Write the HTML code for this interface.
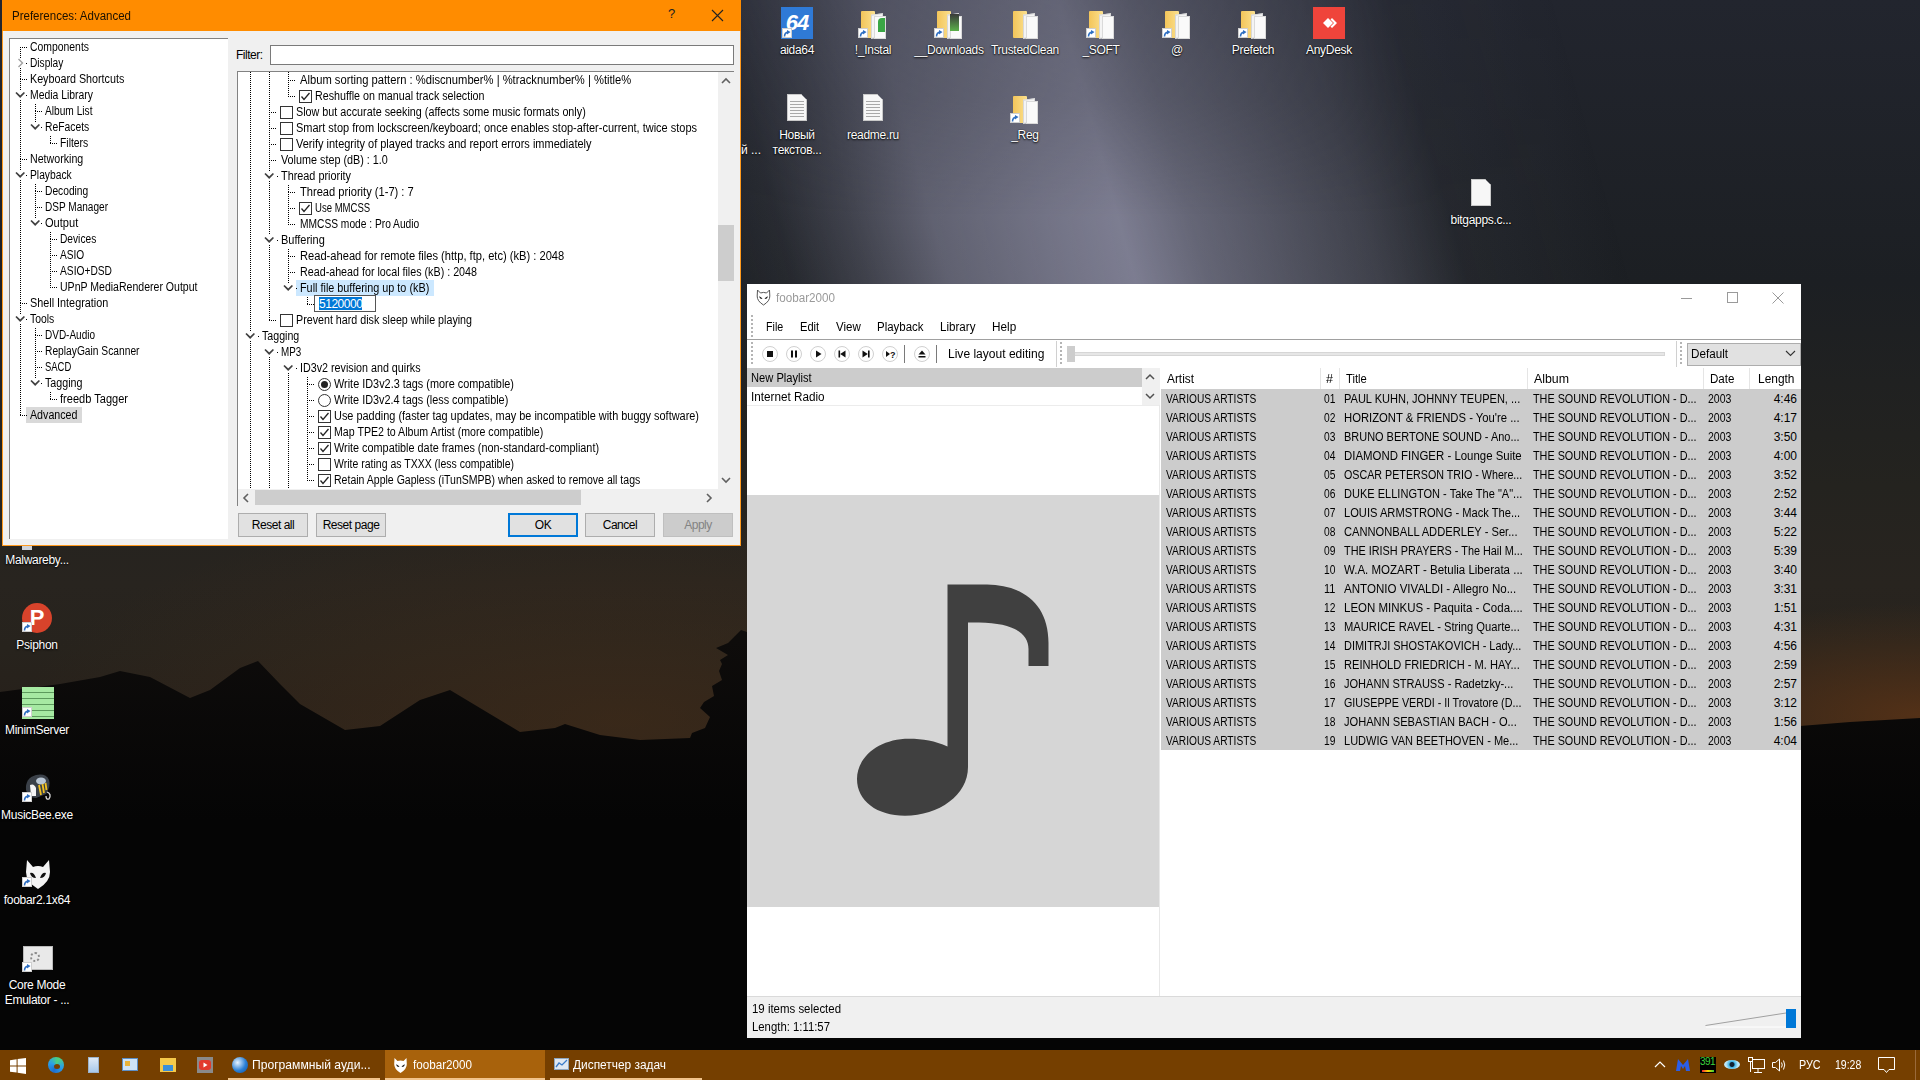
<!DOCTYPE html>
<html><head><meta charset="utf-8"><title>Desktop</title>
<style>
html,body{margin:0;padding:0;}
body{width:1920px;height:1080px;position:relative;overflow:hidden;font-family:"Liberation Sans",sans-serif;font-size:12px;color:#000;background:#0a0a0b;}
</style></head><body>
<svg style="position:absolute;left:0;top:0" width="1920" height="1080" viewBox="0 0 1920 1080"><defs><linearGradient id="sky" x1="0" y1="0" x2="0" y2="1080" gradientUnits="userSpaceOnUse"><stop offset="0" stop-color="#22252e"/><stop offset="0.26" stop-color="#1c1f23"/><stop offset="0.45" stop-color="#24231f"/><stop offset="0.54" stop-color="#28241f"/><stop offset="0.6" stop-color="#27231d"/><stop offset="0.65" stop-color="#27211b"/><stop offset="0.68" stop-color="#28211a"/><stop offset="1" stop-color="#28211a"/></linearGradient><radialGradient id="glow" cx="620" cy="720" r="600" gradientUnits="userSpaceOnUse" gradientTransform="translate(620 720) scale(1 0.3667) translate(-620 -720)"><stop offset="0" stop-color="#4a3019" stop-opacity="0.5"/><stop offset="1" stop-color="#4a3019" stop-opacity="0"/></radialGradient><radialGradient id="glow2" cx="1920" cy="715" r="320" gradientUnits="userSpaceOnUse" gradientTransform="translate(1920 715) scale(1 0.35) translate(-1920 -715)"><stop offset="0" stop-color="#5f3516" stop-opacity="0.78"/><stop offset="1" stop-color="#5c3517" stop-opacity="0"/></radialGradient><linearGradient id="band" x1="0" y1="0" x2="1928" y2="-532" gradientUnits="userSpaceOnUse"><stop offset="0.30" stop-color="#8a8aa0" stop-opacity="0"/><stop offset="0.345" stop-color="#8a8aa0" stop-opacity="0.10"/><stop offset="0.38" stop-color="#8a8aa0" stop-opacity="0.32"/><stop offset="0.42" stop-color="#8a8aa0" stop-opacity="0.62"/><stop offset="0.48" stop-color="#8a8aa0" stop-opacity="0.80"/><stop offset="0.51" stop-color="#8a8aa0" stop-opacity="0.88"/><stop offset="0.545" stop-color="#8a8aa0" stop-opacity="0.66"/><stop offset="0.627" stop-color="#8a8aa0" stop-opacity="0.32"/><stop offset="0.67" stop-color="#8a8aa0" stop-opacity="0.07"/><stop offset="0.75" stop-color="#8a8aa0" stop-opacity="0"/></linearGradient><linearGradient id="bandm" x1="0" y1="0" x2="0" y2="620" gradientUnits="userSpaceOnUse"><stop offset="0" stop-color="#fff" stop-opacity="0.72"/><stop offset="0.16" stop-color="#fff" stop-opacity="0.8"/><stop offset="0.35" stop-color="#fff" stop-opacity="1"/><stop offset="1" stop-color="#fff" stop-opacity="1"/></linearGradient><mask id="bmask" maskUnits="userSpaceOnUse" x="0" y="0" width="1920" height="620"><rect width="1920" height="620" fill="url(#bandm)"/></mask><linearGradient id="mtn" x1="0" y1="640" x2="0" y2="820" gradientUnits="userSpaceOnUse"><stop offset="0" stop-color="#0e0c0b"/><stop offset="1" stop-color="#050505"/></linearGradient></defs><rect width="1920" height="1080" fill="url(#sky)"/><rect width="1920" height="1080" fill="url(#glow)"/><rect width="1920" height="1080" fill="url(#glow2)"/><rect width="1920" height="620" fill="url(#band)" mask="url(#bmask)"/><path d="M0 692 L60 684 L100 677 L120 671 L150 677 L190 698 L210 690 L240 668 L258 661 L280 684 L300 704 L345 730 L380 726 L420 700 L450 690 L480 708 L520 732 L555 728 L565 724 L600 735 L640 740 L690 738 L692 733 L705 728 L710 717 L700 708 L704 702 L714 696 L712 686 L722 680 L719 671 L722 664 L720 660 L728 655 L716 648 L728 643 L735 636 L741 630 L747 632 L752 700 L760 745 L1000 745 L1700 740 L1760 728 L1800 726 L1850 722 L1920 718 L1920 1080 L0 1080Z" fill="url(#mtn)"/></svg><div style="position:absolute;left:781px;top:7px;width:32px;height:32px;background:#2f7ad6"></div><div style="position:absolute;left:781px;top:7px;width:32px;height:32px;line-height:32px;text-align:center;color:#fff;font-weight:bold;font-size:22px;font-style:italic;letter-spacing:-1px">64</div><div style="position:absolute;left:782px;top:28px;width:10px;height:10px;background:#fff;border:1px solid #cfcfcf;box-sizing:border-box"></div><svg style="position:absolute;left:782px;top:28px" width="10" height="10"><path d="M2.5 8.5 Q2.5 4.5 6.5 4" fill="none" stroke="#2f6fc2" stroke-width="1.6"/><path d="M5 2 L8.5 4 L5 6.5Z" fill="#2f6fc2"/></svg><div style="position:absolute;left:747px;top:42px;width:100px;text-align:center;line-height:16px;color:#fff;white-space:pre;text-shadow:0 1px 2px #000,0 0 1px #000;letter-spacing:-0.3px">aida64</div><div style="position:absolute;left:861px;top:11px;width:14px;height:27px;background:linear-gradient(90deg,#f3c55a,#fbe08e);border-radius:1px"></div><div style="position:absolute;left:871px;top:14px;width:12px;height:24px;background:#f4f4f4;border:1px solid #d8d8d8;box-sizing:border-box;transform:skewY(-8deg)"></div><div style="position:absolute;left:874px;top:16px;width:12px;height:23px;background:#fafafa;border:1px solid #dadada;box-sizing:border-box;"></div><div style="position:absolute;left:878px;top:18px;width:7px;height:14px;background:#3aa645;border-radius:4px 0 0 0"></div><div style="position:absolute;left:858px;top:28px;width:10px;height:10px;background:#fff;border:1px solid #cfcfcf;box-sizing:border-box"></div><svg style="position:absolute;left:858px;top:28px" width="10" height="10"><path d="M2.5 8.5 Q2.5 4.5 6.5 4" fill="none" stroke="#2f6fc2" stroke-width="1.6"/><path d="M5 2 L8.5 4 L5 6.5Z" fill="#2f6fc2"/></svg><div style="position:absolute;left:823px;top:42px;width:100px;text-align:center;line-height:16px;color:#fff;white-space:pre;text-shadow:0 1px 2px #000,0 0 1px #000;letter-spacing:-0.3px">!_Instal</div><div style="position:absolute;left:937px;top:11px;width:14px;height:27px;background:linear-gradient(90deg,#f3c55a,#fbe08e);border-radius:1px"></div><div style="position:absolute;left:947px;top:14px;width:12px;height:24px;background:#f4f4f4;border:1px solid #d8d8d8;box-sizing:border-box;transform:skewY(-8deg)"></div><div style="position:absolute;left:950px;top:16px;width:12px;height:23px;background:#fafafa;border:1px solid #dadada;box-sizing:border-box;"></div><div style="position:absolute;left:950px;top:14px;width:9px;height:17px;background:linear-gradient(#3a3a3a,#5bb04a)"></div><div style="position:absolute;left:934px;top:28px;width:10px;height:10px;background:#fff;border:1px solid #cfcfcf;box-sizing:border-box"></div><svg style="position:absolute;left:934px;top:28px" width="10" height="10"><path d="M2.5 8.5 Q2.5 4.5 6.5 4" fill="none" stroke="#2f6fc2" stroke-width="1.6"/><path d="M5 2 L8.5 4 L5 6.5Z" fill="#2f6fc2"/></svg><div style="position:absolute;left:899px;top:42px;width:100px;text-align:center;line-height:16px;color:#fff;white-space:pre;text-shadow:0 1px 2px #000,0 0 1px #000;letter-spacing:-0.3px">__Downloads</div><div style="position:absolute;left:1013px;top:11px;width:14px;height:27px;background:linear-gradient(90deg,#f3c55a,#fbe08e);border-radius:1px"></div><div style="position:absolute;left:1023px;top:14px;width:12px;height:24px;background:#f4f4f4;border:1px solid #d8d8d8;box-sizing:border-box;transform:skewY(-8deg)"></div><div style="position:absolute;left:1026px;top:16px;width:12px;height:23px;background:#fafafa;border:1px solid #dadada;box-sizing:border-box;"></div><div style="position:absolute;left:975px;top:42px;width:100px;text-align:center;line-height:16px;color:#fff;white-space:pre;text-shadow:0 1px 2px #000,0 0 1px #000;letter-spacing:-0.3px">TrustedClean</div><div style="position:absolute;left:1089px;top:11px;width:14px;height:27px;background:linear-gradient(90deg,#f3c55a,#fbe08e);border-radius:1px"></div><div style="position:absolute;left:1099px;top:14px;width:12px;height:24px;background:#f4f4f4;border:1px solid #d8d8d8;box-sizing:border-box;transform:skewY(-8deg)"></div><div style="position:absolute;left:1102px;top:16px;width:12px;height:23px;background:#fafafa;border:1px solid #dadada;box-sizing:border-box;"></div><div style="position:absolute;left:1086px;top:28px;width:10px;height:10px;background:#fff;border:1px solid #cfcfcf;box-sizing:border-box"></div><svg style="position:absolute;left:1086px;top:28px" width="10" height="10"><path d="M2.5 8.5 Q2.5 4.5 6.5 4" fill="none" stroke="#2f6fc2" stroke-width="1.6"/><path d="M5 2 L8.5 4 L5 6.5Z" fill="#2f6fc2"/></svg><div style="position:absolute;left:1051px;top:42px;width:100px;text-align:center;line-height:16px;color:#fff;white-space:pre;text-shadow:0 1px 2px #000,0 0 1px #000;letter-spacing:-0.3px">_SOFT</div><div style="position:absolute;left:1165px;top:11px;width:14px;height:27px;background:linear-gradient(90deg,#f3c55a,#fbe08e);border-radius:1px"></div><div style="position:absolute;left:1175px;top:14px;width:12px;height:24px;background:#f4f4f4;border:1px solid #d8d8d8;box-sizing:border-box;transform:skewY(-8deg)"></div><div style="position:absolute;left:1178px;top:16px;width:12px;height:23px;background:#fafafa;border:1px solid #dadada;box-sizing:border-box;"></div><div style="position:absolute;left:1162px;top:28px;width:10px;height:10px;background:#fff;border:1px solid #cfcfcf;box-sizing:border-box"></div><svg style="position:absolute;left:1162px;top:28px" width="10" height="10"><path d="M2.5 8.5 Q2.5 4.5 6.5 4" fill="none" stroke="#2f6fc2" stroke-width="1.6"/><path d="M5 2 L8.5 4 L5 6.5Z" fill="#2f6fc2"/></svg><div style="position:absolute;left:1127px;top:42px;width:100px;text-align:center;line-height:16px;color:#fff;white-space:pre;text-shadow:0 1px 2px #000,0 0 1px #000;letter-spacing:-0.3px">@</div><div style="position:absolute;left:1241px;top:11px;width:14px;height:27px;background:linear-gradient(90deg,#f3c55a,#fbe08e);border-radius:1px"></div><div style="position:absolute;left:1251px;top:14px;width:12px;height:24px;background:#f4f4f4;border:1px solid #d8d8d8;box-sizing:border-box;transform:skewY(-8deg)"></div><div style="position:absolute;left:1254px;top:16px;width:12px;height:23px;background:#fafafa;border:1px solid #dadada;box-sizing:border-box;"></div><div style="position:absolute;left:1238px;top:28px;width:10px;height:10px;background:#fff;border:1px solid #cfcfcf;box-sizing:border-box"></div><svg style="position:absolute;left:1238px;top:28px" width="10" height="10"><path d="M2.5 8.5 Q2.5 4.5 6.5 4" fill="none" stroke="#2f6fc2" stroke-width="1.6"/><path d="M5 2 L8.5 4 L5 6.5Z" fill="#2f6fc2"/></svg><div style="position:absolute;left:1203px;top:42px;width:100px;text-align:center;line-height:16px;color:#fff;white-space:pre;text-shadow:0 1px 2px #000,0 0 1px #000;letter-spacing:-0.3px">Prefetch</div><div style="position:absolute;left:1313px;top:7px;width:32px;height:32px;background:#ef443b"></div><svg style="position:absolute;left:1313px;top:7px" width="32" height="32"><path d="M10 16 L15 11 L20 16 L15 21Z" fill="#fff"/><path d="M19 11 L24 16 L19 21 L17.5 19.5 L21 16 L17.5 12.5Z" fill="#fff"/></svg><div style="position:absolute;left:1279px;top:42px;width:100px;text-align:center;line-height:16px;color:#fff;white-space:pre;text-shadow:0 1px 2px #000,0 0 1px #000;letter-spacing:-0.3px">AnyDesk</div><div style="position:absolute;left:787px;top:94px;width:20px;height:27px;background:#f7f7f7;border:1px solid #c9c9c9;box-sizing:border-box;clip-path:polygon(0 0,70% 0,100% 22%,100% 100%,0 100%)"></div><div style="position:absolute;left:790px;top:101px;width:14px;height:17px;background:repeating-linear-gradient(to bottom,#a9a9a9 0 1px,transparent 1px 3px)"></div><div style="position:absolute;left:747px;top:127px;width:100px;text-align:center;line-height:16px;color:#fff;white-space:pre;text-shadow:0 1px 2px #000,0 0 1px #000;letter-spacing:-0.3px">Новый</div><div style="position:absolute;left:747px;top:142px;width:100px;text-align:center;line-height:16px;color:#fff;white-space:pre;text-shadow:0 1px 2px #000,0 0 1px #000;letter-spacing:-0.3px">текстов...</div><div style="position:absolute;left:863px;top:94px;width:20px;height:27px;background:#f7f7f7;border:1px solid #c9c9c9;box-sizing:border-box;clip-path:polygon(0 0,70% 0,100% 22%,100% 100%,0 100%)"></div><div style="position:absolute;left:866px;top:101px;width:14px;height:17px;background:repeating-linear-gradient(to bottom,#a9a9a9 0 1px,transparent 1px 3px)"></div><div style="position:absolute;left:823px;top:127px;width:100px;text-align:center;line-height:16px;color:#fff;white-space:pre;text-shadow:0 1px 2px #000,0 0 1px #000;letter-spacing:-0.3px">readme.ru</div><div style="position:absolute;left:1013px;top:96px;width:14px;height:27px;background:linear-gradient(90deg,#f3c55a,#fbe08e);border-radius:1px"></div><div style="position:absolute;left:1023px;top:99px;width:12px;height:24px;background:#f4f4f4;border:1px solid #d8d8d8;box-sizing:border-box;transform:skewY(-8deg)"></div><div style="position:absolute;left:1026px;top:101px;width:12px;height:23px;background:#fafafa;border:1px solid #dadada;box-sizing:border-box;"></div><div style="position:absolute;left:1010px;top:113px;width:10px;height:10px;background:#fff;border:1px solid #cfcfcf;box-sizing:border-box"></div><svg style="position:absolute;left:1010px;top:113px" width="10" height="10"><path d="M2.5 8.5 Q2.5 4.5 6.5 4" fill="none" stroke="#2f6fc2" stroke-width="1.6"/><path d="M5 2 L8.5 4 L5 6.5Z" fill="#2f6fc2"/></svg><div style="position:absolute;left:975px;top:127px;width:100px;text-align:center;line-height:16px;color:#fff;white-space:pre;text-shadow:0 1px 2px #000,0 0 1px #000;letter-spacing:-0.3px">_Reg</div><div style="position:absolute;left:741px;top:142px;line-height:16px;color:#fff;text-shadow:0 1px 2px #000">й ...</div><div style="position:absolute;left:1471px;top:179px;width:20px;height:27px;background:#f7f7f7;border:1px solid #c9c9c9;box-sizing:border-box;clip-path:polygon(0 0,70% 0,100% 22%,100% 100%,0 100%)"></div><div style="position:absolute;left:1431px;top:212px;width:100px;text-align:center;line-height:16px;color:#fff;white-space:pre;text-shadow:0 1px 2px #000,0 0 1px #000;letter-spacing:-0.3px">bitgapps.c...</div><div style="position:absolute;left:22px;top:546px;width:10px;height:4px;background:#cfd3da"></div><div style="position:absolute;left:-13px;top:552px;width:100px;text-align:center;line-height:16px;color:#fff;white-space:pre;text-shadow:0 1px 2px #000,0 0 1px #000;letter-spacing:-0.3px">Malwareby...</div><div style="position:absolute;left:22px;top:603px;width:30px;height:30px;border-radius:50%;background:#d8432b"></div><div style="position:absolute;left:22px;top:603px;width:30px;height:30px;line-height:30px;text-align:center;color:#fff;font-weight:bold;font-size:22px">P</div><div style="position:absolute;left:22px;top:622px;width:10px;height:10px;background:#fff;border:1px solid #cfcfcf;box-sizing:border-box"></div><svg style="position:absolute;left:22px;top:622px" width="10" height="10"><path d="M2.5 8.5 Q2.5 4.5 6.5 4" fill="none" stroke="#2f6fc2" stroke-width="1.6"/><path d="M5 2 L8.5 4 L5 6.5Z" fill="#2f6fc2"/></svg><div style="position:absolute;left:-13px;top:637px;width:100px;text-align:center;line-height:16px;color:#fff;white-space:pre;text-shadow:0 1px 2px #000,0 0 1px #000;letter-spacing:-0.3px">Psiphon</div><div style="position:absolute;left:22px;top:687px;width:32px;height:32px;background:repeating-linear-gradient(to bottom,#a6e9a2 0 5px,#5c9a5c 5px 6px)"></div><div style="position:absolute;left:22px;top:707px;width:10px;height:10px;background:#fff;border:1px solid #cfcfcf;box-sizing:border-box"></div><svg style="position:absolute;left:22px;top:707px" width="10" height="10"><path d="M2.5 8.5 Q2.5 4.5 6.5 4" fill="none" stroke="#2f6fc2" stroke-width="1.6"/><path d="M5 2 L8.5 4 L5 6.5Z" fill="#2f6fc2"/></svg><div style="position:absolute;left:-13px;top:722px;width:100px;text-align:center;line-height:16px;color:#fff;white-space:pre;text-shadow:0 1px 2px #000,0 0 1px #000;letter-spacing:-0.3px">MinimServer</div><svg style="position:absolute;left:22px;top:772px" width="32" height="32"><path d="M4 18 Q3 6 14 3 Q24 1 27 8 Q29 14 24 22 L14 26 Q6 26 4 18Z" fill="#3a4048"/><ellipse cx="19" cy="9" rx="5" ry="3.5" fill="#b9c6d4"/><path d="M8 13 Q12 11 14 16 L14 24 L9 24Z" fill="#f4f4f4"/><path d="M17 13 L19 23 M20.5 12 L22 21 M23.5 11 L24.5 18" stroke="#f0c020" stroke-width="1.8"/><path d="M25 20 Q30 22 27 27 Q24 28 24 24" fill="none" stroke="#ddd" stroke-width="1.3"/></svg><div style="position:absolute;left:22px;top:792px;width:10px;height:10px;background:#fff;border:1px solid #cfcfcf;box-sizing:border-box"></div><svg style="position:absolute;left:22px;top:792px" width="10" height="10"><path d="M2.5 8.5 Q2.5 4.5 6.5 4" fill="none" stroke="#2f6fc2" stroke-width="1.6"/><path d="M5 2 L8.5 4 L5 6.5Z" fill="#2f6fc2"/></svg><div style="position:absolute;left:-13px;top:807px;width:100px;text-align:center;line-height:16px;color:#fff;white-space:pre;text-shadow:0 1px 2px #000,0 0 1px #000;letter-spacing:-0.3px">MusicBee.exe</div><svg style="position:absolute;left:22px;top:858px" width="32" height="32"><path d="M5 2 L11 9 Q16 7 21 9 L27 2 L28 14 Q28 24 16 31 Q4 24 4 14Z" fill="#f4f4f4"/><path d="M8 15 Q12 14 14 20 Q9 20 8 15Z M24 15 Q20 14 18 20 Q23 20 24 15Z" fill="#111"/></svg><div style="position:absolute;left:22px;top:877px;width:10px;height:10px;background:#fff;border:1px solid #cfcfcf;box-sizing:border-box"></div><svg style="position:absolute;left:22px;top:877px" width="10" height="10"><path d="M2.5 8.5 Q2.5 4.5 6.5 4" fill="none" stroke="#2f6fc2" stroke-width="1.6"/><path d="M5 2 L8.5 4 L5 6.5Z" fill="#2f6fc2"/></svg><div style="position:absolute;left:-13px;top:892px;width:100px;text-align:center;line-height:16px;color:#fff;white-space:pre;text-shadow:0 1px 2px #000,0 0 1px #000;letter-spacing:-0.3px">foobar2.1x64</div><div style="position:absolute;left:23px;top:946px;width:30px;height:24px;background:#e9e9e9;border:1px solid #bbb;box-sizing:border-box"></div><div style="position:absolute;left:30px;top:952px;width:10px;height:10px;border-radius:50%;border:2px dotted #8a8a8a;box-sizing:border-box"></div><div style="position:absolute;left:22px;top:962px;width:10px;height:10px;background:#fff;border:1px solid #cfcfcf;box-sizing:border-box"></div><svg style="position:absolute;left:22px;top:962px" width="10" height="10"><path d="M2.5 8.5 Q2.5 4.5 6.5 4" fill="none" stroke="#2f6fc2" stroke-width="1.6"/><path d="M5 2 L8.5 4 L5 6.5Z" fill="#2f6fc2"/></svg><div style="position:absolute;left:-13px;top:977px;width:100px;text-align:center;line-height:16px;color:#fff;white-space:pre;text-shadow:0 1px 2px #000,0 0 1px #000;letter-spacing:-0.3px">Core Mode</div><div style="position:absolute;left:-13px;top:992px;width:100px;text-align:center;line-height:16px;color:#fff;white-space:pre;text-shadow:0 1px 2px #000,0 0 1px #000;letter-spacing:-0.3px">Emulator - ...</div><div style="position:absolute;left:2px;top:0px;width:739px;height:546px;background:#f0f0f0;border:1px solid #ff9a1f;box-sizing:border-box"></div><div style="position:absolute;left:2px;top:0px;width:739px;height:31px;background:#ff8c00"></div><div style="position:absolute;left:11.5px;top:8px;white-space:pre;transform:scaleX(0.9591);transform-origin:0 0;font-size:12px;line-height:16px;color:#1a1000">Preferences: Advanced</div><div style="position:absolute;left:668px;top:6px;white-space:pre;font-size:13px;line-height:16px;color:#222">?</div><svg style="position:absolute;left:711px;top:9px" width="13" height="13"><path d="M1 1 L12 12 M12 1 L1 12" stroke="#222" stroke-width="1.1"/></svg><div style="position:absolute;left:9px;top:38px;width:219px;height:501px;background:#fff;border-top:1px solid #828282;border-left:1px solid #828282;box-sizing:border-box"></div><div style="position:absolute;left:26px;top:407px;width:56px;height:16px;background:#d9d9d9"></div><div style="position:absolute;left:20px;top:47px;width:8px;height:1px;background:repeating-linear-gradient(to right,#000 0 1px,transparent 1px 2px)"></div><div style="position:absolute;left:30px;top:39px;white-space:pre;transform:scaleX(0.8670);transform-origin:0 0;line-height:16px">Components</div><svg style="position:absolute;left:17px;top:58px" width="7" height="10"><path d="M1.5 1 L5.5 5 L1.5 9" fill="none" stroke="#a0a0a0" stroke-width="1.4"/></svg><div style="position:absolute;left:26px;top:63px;width:1px;height:1px;background:#000"></div><div style="position:absolute;left:30px;top:55px;white-space:pre;transform:scaleX(0.8448);transform-origin:0 0;line-height:16px">Display</div><div style="position:absolute;left:20px;top:79px;width:8px;height:1px;background:repeating-linear-gradient(to right,#000 0 1px,transparent 1px 2px)"></div><div style="position:absolute;left:30px;top:71px;white-space:pre;transform:scaleX(0.8942);transform-origin:0 0;line-height:16px">Keyboard Shortcuts</div><svg style="position:absolute;left:15px;top:91px" width="11" height="8"><path d="M1 1.5 L5.2 5.7 L9.4 1.5" fill="none" stroke="#404040" stroke-width="1.7"/></svg><div style="position:absolute;left:26px;top:95px;width:1px;height:1px;background:#000"></div><div style="position:absolute;left:30px;top:87px;white-space:pre;transform:scaleX(0.8665);transform-origin:0 0;line-height:16px">Media Library</div><div style="position:absolute;left:35px;top:111px;width:8px;height:1px;background:repeating-linear-gradient(to right,#000 0 1px,transparent 1px 2px)"></div><div style="position:absolute;left:45px;top:103px;white-space:pre;transform:scaleX(0.8477);transform-origin:0 0;line-height:16px">Album List</div><svg style="position:absolute;left:30px;top:123px" width="11" height="8"><path d="M1 1.5 L5.2 5.7 L9.4 1.5" fill="none" stroke="#404040" stroke-width="1.7"/></svg><div style="position:absolute;left:41px;top:127px;width:1px;height:1px;background:#000"></div><div style="position:absolute;left:45px;top:119px;white-space:pre;transform:scaleX(0.8616);transform-origin:0 0;line-height:16px">ReFacets</div><div style="position:absolute;left:50px;top:143px;width:8px;height:1px;background:repeating-linear-gradient(to right,#000 0 1px,transparent 1px 2px)"></div><div style="position:absolute;left:60px;top:135px;white-space:pre;transform:scaleX(0.8647);transform-origin:0 0;line-height:16px">Filters</div><div style="position:absolute;left:20px;top:159px;width:8px;height:1px;background:repeating-linear-gradient(to right,#000 0 1px,transparent 1px 2px)"></div><div style="position:absolute;left:30px;top:151px;white-space:pre;transform:scaleX(0.8870);transform-origin:0 0;line-height:16px">Networking</div><svg style="position:absolute;left:15px;top:171px" width="11" height="8"><path d="M1 1.5 L5.2 5.7 L9.4 1.5" fill="none" stroke="#404040" stroke-width="1.7"/></svg><div style="position:absolute;left:26px;top:175px;width:1px;height:1px;background:#000"></div><div style="position:absolute;left:30px;top:167px;white-space:pre;transform:scaleX(0.8572);transform-origin:0 0;line-height:16px">Playback</div><div style="position:absolute;left:35px;top:191px;width:8px;height:1px;background:repeating-linear-gradient(to right,#000 0 1px,transparent 1px 2px)"></div><div style="position:absolute;left:45px;top:183px;white-space:pre;transform:scaleX(0.8530);transform-origin:0 0;line-height:16px">Decoding</div><div style="position:absolute;left:35px;top:207px;width:8px;height:1px;background:repeating-linear-gradient(to right,#000 0 1px,transparent 1px 2px)"></div><div style="position:absolute;left:45px;top:199px;white-space:pre;transform:scaleX(0.8383);transform-origin:0 0;line-height:16px">DSP Manager</div><svg style="position:absolute;left:30px;top:219px" width="11" height="8"><path d="M1 1.5 L5.2 5.7 L9.4 1.5" fill="none" stroke="#404040" stroke-width="1.7"/></svg><div style="position:absolute;left:41px;top:223px;width:1px;height:1px;background:#000"></div><div style="position:absolute;left:45px;top:215px;white-space:pre;transform:scaleX(0.9228);transform-origin:0 0;line-height:16px">Output</div><div style="position:absolute;left:50px;top:239px;width:8px;height:1px;background:repeating-linear-gradient(to right,#000 0 1px,transparent 1px 2px)"></div><div style="position:absolute;left:60px;top:231px;white-space:pre;transform:scaleX(0.8492);transform-origin:0 0;line-height:16px">Devices</div><div style="position:absolute;left:50px;top:255px;width:8px;height:1px;background:repeating-linear-gradient(to right,#000 0 1px,transparent 1px 2px)"></div><div style="position:absolute;left:60px;top:247px;white-space:pre;transform:scaleX(0.8453);transform-origin:0 0;line-height:16px">ASIO</div><div style="position:absolute;left:50px;top:271px;width:8px;height:1px;background:repeating-linear-gradient(to right,#000 0 1px,transparent 1px 2px)"></div><div style="position:absolute;left:60px;top:263px;white-space:pre;transform:scaleX(0.8520);transform-origin:0 0;line-height:16px">ASIO+DSD</div><div style="position:absolute;left:50px;top:287px;width:8px;height:1px;background:repeating-linear-gradient(to right,#000 0 1px,transparent 1px 2px)"></div><div style="position:absolute;left:60px;top:279px;white-space:pre;transform:scaleX(0.8783);transform-origin:0 0;line-height:16px">UPnP MediaRenderer Output</div><div style="position:absolute;left:20px;top:303px;width:8px;height:1px;background:repeating-linear-gradient(to right,#000 0 1px,transparent 1px 2px)"></div><div style="position:absolute;left:30px;top:295px;white-space:pre;transform:scaleX(0.9022);transform-origin:0 0;line-height:16px">Shell Integration</div><svg style="position:absolute;left:15px;top:315px" width="11" height="8"><path d="M1 1.5 L5.2 5.7 L9.4 1.5" fill="none" stroke="#404040" stroke-width="1.7"/></svg><div style="position:absolute;left:26px;top:319px;width:1px;height:1px;background:#000"></div><div style="position:absolute;left:30px;top:311px;white-space:pre;transform:scaleX(0.8656);transform-origin:0 0;line-height:16px">Tools</div><div style="position:absolute;left:35px;top:335px;width:8px;height:1px;background:repeating-linear-gradient(to right,#000 0 1px,transparent 1px 2px)"></div><div style="position:absolute;left:45px;top:327px;white-space:pre;transform:scaleX(0.8329);transform-origin:0 0;line-height:16px">DVD-Audio</div><div style="position:absolute;left:35px;top:351px;width:8px;height:1px;background:repeating-linear-gradient(to right,#000 0 1px,transparent 1px 2px)"></div><div style="position:absolute;left:45px;top:343px;white-space:pre;transform:scaleX(0.8534);transform-origin:0 0;line-height:16px">ReplayGain Scanner</div><div style="position:absolute;left:35px;top:367px;width:8px;height:1px;background:repeating-linear-gradient(to right,#000 0 1px,transparent 1px 2px)"></div><div style="position:absolute;left:45px;top:359px;white-space:pre;transform:scaleX(0.7873);transform-origin:0 0;line-height:16px">SACD</div><svg style="position:absolute;left:30px;top:379px" width="11" height="8"><path d="M1 1.5 L5.2 5.7 L9.4 1.5" fill="none" stroke="#404040" stroke-width="1.7"/></svg><div style="position:absolute;left:41px;top:383px;width:1px;height:1px;background:#000"></div><div style="position:absolute;left:45px;top:375px;white-space:pre;transform:scaleX(0.8919);transform-origin:0 0;line-height:16px">Tagging</div><div style="position:absolute;left:50px;top:399px;width:8px;height:1px;background:repeating-linear-gradient(to right,#000 0 1px,transparent 1px 2px)"></div><div style="position:absolute;left:60px;top:391px;white-space:pre;transform:scaleX(0.9209);transform-origin:0 0;line-height:16px">freedb Tagger</div><div style="position:absolute;left:20px;top:415px;width:8px;height:1px;background:repeating-linear-gradient(to right,#000 0 1px,transparent 1px 2px)"></div><div style="position:absolute;left:30px;top:407px;white-space:pre;transform:scaleX(0.8899);transform-origin:0 0;line-height:16px">Advanced</div><div style="position:absolute;left:20px;top:47px;width:1px;height:11px;background:repeating-linear-gradient(to bottom,#000 0 1px,transparent 1px 2px)"></div><div style="position:absolute;left:20px;top:68px;width:1px;height:11px;background:repeating-linear-gradient(to bottom,#000 0 1px,transparent 1px 2px)"></div><div style="position:absolute;left:20px;top:79px;width:1px;height:11px;background:repeating-linear-gradient(to bottom,#000 0 1px,transparent 1px 2px)"></div><div style="position:absolute;left:20px;top:100px;width:1px;height:59px;background:repeating-linear-gradient(to bottom,#000 0 1px,transparent 1px 2px)"></div><div style="position:absolute;left:20px;top:159px;width:1px;height:11px;background:repeating-linear-gradient(to bottom,#000 0 1px,transparent 1px 2px)"></div><div style="position:absolute;left:20px;top:180px;width:1px;height:123px;background:repeating-linear-gradient(to bottom,#000 0 1px,transparent 1px 2px)"></div><div style="position:absolute;left:20px;top:303px;width:1px;height:11px;background:repeating-linear-gradient(to bottom,#000 0 1px,transparent 1px 2px)"></div><div style="position:absolute;left:20px;top:324px;width:1px;height:91px;background:repeating-linear-gradient(to bottom,#000 0 1px,transparent 1px 2px)"></div><div style="position:absolute;left:35px;top:104px;width:1px;height:7px;background:repeating-linear-gradient(to bottom,#000 0 1px,transparent 1px 2px)"></div><div style="position:absolute;left:35px;top:111px;width:1px;height:11px;background:repeating-linear-gradient(to bottom,#000 0 1px,transparent 1px 2px)"></div><div style="position:absolute;left:35px;top:184px;width:1px;height:7px;background:repeating-linear-gradient(to bottom,#000 0 1px,transparent 1px 2px)"></div><div style="position:absolute;left:35px;top:191px;width:1px;height:16px;background:repeating-linear-gradient(to bottom,#000 0 1px,transparent 1px 2px)"></div><div style="position:absolute;left:35px;top:207px;width:1px;height:11px;background:repeating-linear-gradient(to bottom,#000 0 1px,transparent 1px 2px)"></div><div style="position:absolute;left:35px;top:328px;width:1px;height:7px;background:repeating-linear-gradient(to bottom,#000 0 1px,transparent 1px 2px)"></div><div style="position:absolute;left:35px;top:335px;width:1px;height:16px;background:repeating-linear-gradient(to bottom,#000 0 1px,transparent 1px 2px)"></div><div style="position:absolute;left:35px;top:351px;width:1px;height:16px;background:repeating-linear-gradient(to bottom,#000 0 1px,transparent 1px 2px)"></div><div style="position:absolute;left:35px;top:367px;width:1px;height:11px;background:repeating-linear-gradient(to bottom,#000 0 1px,transparent 1px 2px)"></div><div style="position:absolute;left:50px;top:136px;width:1px;height:7px;background:repeating-linear-gradient(to bottom,#000 0 1px,transparent 1px 2px)"></div><div style="position:absolute;left:50px;top:232px;width:1px;height:7px;background:repeating-linear-gradient(to bottom,#000 0 1px,transparent 1px 2px)"></div><div style="position:absolute;left:50px;top:239px;width:1px;height:16px;background:repeating-linear-gradient(to bottom,#000 0 1px,transparent 1px 2px)"></div><div style="position:absolute;left:50px;top:255px;width:1px;height:16px;background:repeating-linear-gradient(to bottom,#000 0 1px,transparent 1px 2px)"></div><div style="position:absolute;left:50px;top:271px;width:1px;height:16px;background:repeating-linear-gradient(to bottom,#000 0 1px,transparent 1px 2px)"></div><div style="position:absolute;left:50px;top:392px;width:1px;height:7px;background:repeating-linear-gradient(to bottom,#000 0 1px,transparent 1px 2px)"></div><div style="position:absolute;left:20px;top:47px;width:1px;height:1px;background:repeating-linear-gradient(to bottom,#000 0 1px,transparent 1px 2px)"></div><div style="position:absolute;left:236px;top:47px;white-space:pre;line-height:16px;letter-spacing:-0.47px;">Filter:</div><div style="position:absolute;left:270px;top:45px;width:464px;height:20px;background:#fff;border:1px solid #7a7a7a;box-sizing:border-box"></div><div style="position:absolute;left:237px;top:71px;width:497px;height:435px;background:#fff;border-top:1px solid #828282;border-left:1px solid #828282;box-sizing:border-box"></div><div style="position:absolute;left:718px;top:72px;width:16px;height:417px;background:#f0f0f0"></div><div style="position:absolute;left:718px;top:225px;width:16px;height:56px;background:#cdcdcd"></div><svg style="position:absolute;left:721px;top:77px" width="10" height="8"><path d="M1 6 L5 2 L9 6" fill="none" stroke="#606060" stroke-width="1.6"/></svg><svg style="position:absolute;left:721px;top:476px" width="10" height="8"><path d="M1 2 L5 6 L9 2" fill="none" stroke="#606060" stroke-width="1.6"/></svg><div style="position:absolute;left:238px;top:489px;width:496px;height:17px;background:#f0f0f0"></div><div style="position:absolute;left:255px;top:490px;width:326px;height:15px;background:#cdcdcd"></div><svg style="position:absolute;left:242px;top:493px" width="8" height="10"><path d="M6 1 L2 5 L6 9" fill="none" stroke="#606060" stroke-width="1.6"/></svg><svg style="position:absolute;left:705px;top:493px" width="8" height="10"><path d="M2 1 L6 5 L2 9" fill="none" stroke="#606060" stroke-width="1.6"/></svg><div style="position:absolute;left:0;top:0;width:1920px;height:1080px;clip:rect(72px,718px,489px,238px)"><div style="position:absolute;left:250px;top:72px;width:1px;height:259px;background:repeating-linear-gradient(to bottom,#000 0 1px,transparent 1px 2px)"></div><div style="position:absolute;left:250px;top:341px;width:1px;height:148px;background:repeating-linear-gradient(to bottom,#000 0 1px,transparent 1px 2px)"></div><div style="position:absolute;left:269px;top:72px;width:1px;height:40px;background:repeating-linear-gradient(to bottom,#000 0 1px,transparent 1px 2px)"></div><div style="position:absolute;left:269px;top:112px;width:1px;height:16px;background:repeating-linear-gradient(to bottom,#000 0 1px,transparent 1px 2px)"></div><div style="position:absolute;left:269px;top:128px;width:1px;height:16px;background:repeating-linear-gradient(to bottom,#000 0 1px,transparent 1px 2px)"></div><div style="position:absolute;left:269px;top:144px;width:1px;height:16px;background:repeating-linear-gradient(to bottom,#000 0 1px,transparent 1px 2px)"></div><div style="position:absolute;left:269px;top:160px;width:1px;height:11px;background:repeating-linear-gradient(to bottom,#000 0 1px,transparent 1px 2px)"></div><div style="position:absolute;left:269px;top:181px;width:1px;height:54px;background:repeating-linear-gradient(to bottom,#000 0 1px,transparent 1px 2px)"></div><div style="position:absolute;left:269px;top:245px;width:1px;height:75px;background:repeating-linear-gradient(to bottom,#000 0 1px,transparent 1px 2px)"></div><div style="position:absolute;left:269px;top:357px;width:1px;height:132px;background:repeating-linear-gradient(to bottom,#000 0 1px,transparent 1px 2px)"></div><div style="position:absolute;left:288px;top:72px;width:1px;height:8px;background:repeating-linear-gradient(to bottom,#000 0 1px,transparent 1px 2px)"></div><div style="position:absolute;left:288px;top:80px;width:1px;height:16px;background:repeating-linear-gradient(to bottom,#000 0 1px,transparent 1px 2px)"></div><div style="position:absolute;left:288px;top:185px;width:1px;height:7px;background:repeating-linear-gradient(to bottom,#000 0 1px,transparent 1px 2px)"></div><div style="position:absolute;left:288px;top:192px;width:1px;height:16px;background:repeating-linear-gradient(to bottom,#000 0 1px,transparent 1px 2px)"></div><div style="position:absolute;left:288px;top:208px;width:1px;height:16px;background:repeating-linear-gradient(to bottom,#000 0 1px,transparent 1px 2px)"></div><div style="position:absolute;left:288px;top:249px;width:1px;height:7px;background:repeating-linear-gradient(to bottom,#000 0 1px,transparent 1px 2px)"></div><div style="position:absolute;left:288px;top:256px;width:1px;height:16px;background:repeating-linear-gradient(to bottom,#000 0 1px,transparent 1px 2px)"></div><div style="position:absolute;left:288px;top:272px;width:1px;height:11px;background:repeating-linear-gradient(to bottom,#000 0 1px,transparent 1px 2px)"></div><div style="position:absolute;left:288px;top:373px;width:1px;height:116px;background:repeating-linear-gradient(to bottom,#000 0 1px,transparent 1px 2px)"></div><div style="position:absolute;left:307px;top:297px;width:1px;height:7px;background:repeating-linear-gradient(to bottom,#000 0 1px,transparent 1px 2px)"></div><div style="position:absolute;left:307px;top:377px;width:1px;height:7px;background:repeating-linear-gradient(to bottom,#000 0 1px,transparent 1px 2px)"></div><div style="position:absolute;left:307px;top:384px;width:1px;height:16px;background:repeating-linear-gradient(to bottom,#000 0 1px,transparent 1px 2px)"></div><div style="position:absolute;left:307px;top:400px;width:1px;height:16px;background:repeating-linear-gradient(to bottom,#000 0 1px,transparent 1px 2px)"></div><div style="position:absolute;left:307px;top:416px;width:1px;height:16px;background:repeating-linear-gradient(to bottom,#000 0 1px,transparent 1px 2px)"></div><div style="position:absolute;left:307px;top:432px;width:1px;height:16px;background:repeating-linear-gradient(to bottom,#000 0 1px,transparent 1px 2px)"></div><div style="position:absolute;left:307px;top:448px;width:1px;height:16px;background:repeating-linear-gradient(to bottom,#000 0 1px,transparent 1px 2px)"></div><div style="position:absolute;left:307px;top:464px;width:1px;height:16px;background:repeating-linear-gradient(to bottom,#000 0 1px,transparent 1px 2px)"></div><div style="position:absolute;left:288px;top:80px;width:8px;height:1px;background:repeating-linear-gradient(to right,#000 0 1px,transparent 1px 2px)"></div><div style="position:absolute;left:299.5px;top:72px;white-space:pre;transform:scaleX(0.9330);transform-origin:0 0;line-height:16px">Album sorting pattern : %discnumber% | %tracknumber% | %title%</div><div style="position:absolute;left:288px;top:96px;width:8px;height:1px;background:repeating-linear-gradient(to right,#000 0 1px,transparent 1px 2px)"></div><div style="position:absolute;left:299px;top:90px;width:11px;height:11px;border:1px solid #333;background:#fff"></div><svg style="position:absolute;left:299px;top:90px" width="13" height="13"><path d="M2.5 6.5 L5 9.5 L10.5 3" fill="none" stroke="#222" stroke-width="1.3"/></svg><div style="position:absolute;left:315px;top:88px;white-space:pre;transform:scaleX(0.8926);transform-origin:0 0;line-height:16px">Reshuffle on manual track selection</div><div style="position:absolute;left:269px;top:112px;width:8px;height:1px;background:repeating-linear-gradient(to right,#000 0 1px,transparent 1px 2px)"></div><div style="position:absolute;left:280px;top:106px;width:11px;height:11px;border:1px solid #333;background:#fff"></div><div style="position:absolute;left:296px;top:104px;white-space:pre;transform:scaleX(0.8982);transform-origin:0 0;line-height:16px">Slow but accurate seeking (affects some music formats only)</div><div style="position:absolute;left:269px;top:128px;width:8px;height:1px;background:repeating-linear-gradient(to right,#000 0 1px,transparent 1px 2px)"></div><div style="position:absolute;left:280px;top:122px;width:11px;height:11px;border:1px solid #333;background:#fff"></div><div style="position:absolute;left:296px;top:120px;white-space:pre;transform:scaleX(0.9151);transform-origin:0 0;line-height:16px">Smart stop from lockscreen/keyboard; once enables stop-after-current, twice stops</div><div style="position:absolute;left:269px;top:144px;width:8px;height:1px;background:repeating-linear-gradient(to right,#000 0 1px,transparent 1px 2px)"></div><div style="position:absolute;left:280px;top:138px;width:11px;height:11px;border:1px solid #333;background:#fff"></div><div style="position:absolute;left:296px;top:136px;white-space:pre;transform:scaleX(0.9154);transform-origin:0 0;line-height:16px">Verify integrity of played tracks and report errors immediately</div><div style="position:absolute;left:269px;top:160px;width:8px;height:1px;background:repeating-linear-gradient(to right,#000 0 1px,transparent 1px 2px)"></div><div style="position:absolute;left:280.5px;top:152px;white-space:pre;transform:scaleX(0.8991);transform-origin:0 0;line-height:16px">Volume step (dB) : 1.0</div><svg style="position:absolute;left:264px;top:172px" width="11" height="8"><path d="M1 1.5 L5.2 5.7 L9.4 1.5" fill="none" stroke="#404040" stroke-width="1.7"/></svg><div style="position:absolute;left:277px;top:176px;width:1px;height:1px;background:#000"></div><div style="position:absolute;left:280.5px;top:168px;white-space:pre;transform:scaleX(0.9047);transform-origin:0 0;line-height:16px">Thread priority</div><div style="position:absolute;left:288px;top:192px;width:8px;height:1px;background:repeating-linear-gradient(to right,#000 0 1px,transparent 1px 2px)"></div><div style="position:absolute;left:299.5px;top:184px;white-space:pre;transform:scaleX(0.9269);transform-origin:0 0;line-height:16px">Thread priority (1-7) : 7</div><div style="position:absolute;left:288px;top:208px;width:8px;height:1px;background:repeating-linear-gradient(to right,#000 0 1px,transparent 1px 2px)"></div><div style="position:absolute;left:299px;top:202px;width:11px;height:11px;border:1px solid #333;background:#fff"></div><svg style="position:absolute;left:299px;top:202px" width="13" height="13"><path d="M2.5 6.5 L5 9.5 L10.5 3" fill="none" stroke="#222" stroke-width="1.3"/></svg><div style="position:absolute;left:315px;top:200px;white-space:pre;transform:scaleX(0.7968);transform-origin:0 0;line-height:16px">Use MMCSS</div><div style="position:absolute;left:288px;top:224px;width:8px;height:1px;background:repeating-linear-gradient(to right,#000 0 1px,transparent 1px 2px)"></div><div style="position:absolute;left:299.5px;top:216px;white-space:pre;transform:scaleX(0.8514);transform-origin:0 0;line-height:16px">MMCSS mode : Pro Audio</div><svg style="position:absolute;left:264px;top:236px" width="11" height="8"><path d="M1 1.5 L5.2 5.7 L9.4 1.5" fill="none" stroke="#404040" stroke-width="1.7"/></svg><div style="position:absolute;left:277px;top:240px;width:1px;height:1px;background:#000"></div><div style="position:absolute;left:280.5px;top:232px;white-space:pre;transform:scaleX(0.9150);transform-origin:0 0;line-height:16px">Buffering</div><div style="position:absolute;left:288px;top:256px;width:8px;height:1px;background:repeating-linear-gradient(to right,#000 0 1px,transparent 1px 2px)"></div><div style="position:absolute;left:299.5px;top:248px;white-space:pre;transform:scaleX(0.9278);transform-origin:0 0;line-height:16px">Read-ahead for remote files (http, ftp, etc) (kB) : 2048</div><div style="position:absolute;left:288px;top:272px;width:8px;height:1px;background:repeating-linear-gradient(to right,#000 0 1px,transparent 1px 2px)"></div><div style="position:absolute;left:299.5px;top:264px;white-space:pre;transform:scaleX(0.8934);transform-origin:0 0;line-height:16px">Read-ahead for local files (kB) : 2048</div><div style="position:absolute;left:296px;top:280px;width:138px;height:16px;background:#cce8ff"></div><svg style="position:absolute;left:283px;top:284px" width="11" height="8"><path d="M1 1.5 L5.2 5.7 L9.4 1.5" fill="none" stroke="#404040" stroke-width="1.7"/></svg><div style="position:absolute;left:296px;top:288px;width:1px;height:1px;background:#000"></div><div style="position:absolute;left:299.5px;top:280px;white-space:pre;transform:scaleX(0.9027);transform-origin:0 0;line-height:16px">Full file buffering up to (kB)</div><div style="position:absolute;left:307px;top:304px;width:7px;height:1px;background:repeating-linear-gradient(to right,#000 0 1px,transparent 1px 2px)"></div><div style="position:absolute;left:314px;top:295px;width:62px;height:17px;background:#fff;border:1px solid #555;box-sizing:border-box"></div><div style="position:absolute;left:319px;top:297px;width:43px;height:13px;background:#0078d7"></div><div style="position:absolute;left:319px;top:296px;white-space:pre;line-height:16px;color:#fff;letter-spacing:-0.47px;">5120000</div><div style="position:absolute;left:269px;top:320px;width:8px;height:1px;background:repeating-linear-gradient(to right,#000 0 1px,transparent 1px 2px)"></div><div style="position:absolute;left:280px;top:314px;width:11px;height:11px;border:1px solid #333;background:#fff"></div><div style="position:absolute;left:296px;top:312px;white-space:pre;transform:scaleX(0.8914);transform-origin:0 0;line-height:16px">Prevent hard disk sleep while playing</div><svg style="position:absolute;left:245px;top:332px" width="11" height="8"><path d="M1 1.5 L5.2 5.7 L9.4 1.5" fill="none" stroke="#404040" stroke-width="1.7"/></svg><div style="position:absolute;left:258px;top:336px;width:1px;height:1px;background:#000"></div><div style="position:absolute;left:261.5px;top:328px;white-space:pre;transform:scaleX(0.8859);transform-origin:0 0;line-height:16px">Tagging</div><svg style="position:absolute;left:264px;top:348px" width="11" height="8"><path d="M1 1.5 L5.2 5.7 L9.4 1.5" fill="none" stroke="#404040" stroke-width="1.7"/></svg><div style="position:absolute;left:277px;top:352px;width:1px;height:1px;background:#000"></div><div style="position:absolute;left:280.5px;top:344px;white-space:pre;transform:scaleX(0.8203);transform-origin:0 0;line-height:16px">MP3</div><svg style="position:absolute;left:283px;top:364px" width="11" height="8"><path d="M1 1.5 L5.2 5.7 L9.4 1.5" fill="none" stroke="#404040" stroke-width="1.7"/></svg><div style="position:absolute;left:296px;top:368px;width:1px;height:1px;background:#000"></div><div style="position:absolute;left:299.5px;top:360px;white-space:pre;transform:scaleX(0.8944);transform-origin:0 0;line-height:16px">ID3v2 revision and quirks</div><div style="position:absolute;left:307px;top:384px;width:8px;height:1px;background:repeating-linear-gradient(to right,#000 0 1px,transparent 1px 2px)"></div><div style="position:absolute;left:318px;top:378px;width:11px;height:11px;border:1px solid #333;border-radius:50%;background:#fff"></div><div style="position:absolute;left:321px;top:381px;width:7px;height:7px;border-radius:50%;background:#222"></div><div style="position:absolute;left:334px;top:376px;white-space:pre;transform:scaleX(0.9067);transform-origin:0 0;line-height:16px">Write ID3v2.3 tags (more compatible)</div><div style="position:absolute;left:307px;top:400px;width:8px;height:1px;background:repeating-linear-gradient(to right,#000 0 1px,transparent 1px 2px)"></div><div style="position:absolute;left:318px;top:394px;width:11px;height:11px;border:1px solid #333;border-radius:50%;background:#fff"></div><div style="position:absolute;left:334px;top:392px;white-space:pre;transform:scaleX(0.9051);transform-origin:0 0;line-height:16px">Write ID3v2.4 tags (less compatible)</div><div style="position:absolute;left:307px;top:416px;width:8px;height:1px;background:repeating-linear-gradient(to right,#000 0 1px,transparent 1px 2px)"></div><div style="position:absolute;left:318px;top:410px;width:11px;height:11px;border:1px solid #333;background:#fff"></div><svg style="position:absolute;left:318px;top:410px" width="13" height="13"><path d="M2.5 6.5 L5 9.5 L10.5 3" fill="none" stroke="#222" stroke-width="1.3"/></svg><div style="position:absolute;left:334px;top:408px;white-space:pre;transform:scaleX(0.9105);transform-origin:0 0;line-height:16px">Use padding (faster tag updates, may be incompatible with buggy software)</div><div style="position:absolute;left:307px;top:432px;width:8px;height:1px;background:repeating-linear-gradient(to right,#000 0 1px,transparent 1px 2px)"></div><div style="position:absolute;left:318px;top:426px;width:11px;height:11px;border:1px solid #333;background:#fff"></div><svg style="position:absolute;left:318px;top:426px" width="13" height="13"><path d="M2.5 6.5 L5 9.5 L10.5 3" fill="none" stroke="#222" stroke-width="1.3"/></svg><div style="position:absolute;left:334px;top:424px;white-space:pre;transform:scaleX(0.8846);transform-origin:0 0;line-height:16px">Map TPE2 to Album Artist (more compatible)</div><div style="position:absolute;left:307px;top:448px;width:8px;height:1px;background:repeating-linear-gradient(to right,#000 0 1px,transparent 1px 2px)"></div><div style="position:absolute;left:318px;top:442px;width:11px;height:11px;border:1px solid #333;background:#fff"></div><svg style="position:absolute;left:318px;top:442px" width="13" height="13"><path d="M2.5 6.5 L5 9.5 L10.5 3" fill="none" stroke="#222" stroke-width="1.3"/></svg><div style="position:absolute;left:334px;top:440px;white-space:pre;transform:scaleX(0.9037);transform-origin:0 0;line-height:16px">Write compatible date frames (non-standard-compliant)</div><div style="position:absolute;left:307px;top:464px;width:8px;height:1px;background:repeating-linear-gradient(to right,#000 0 1px,transparent 1px 2px)"></div><div style="position:absolute;left:318px;top:458px;width:11px;height:11px;border:1px solid #333;background:#fff"></div><div style="position:absolute;left:334px;top:456px;white-space:pre;transform:scaleX(0.8753);transform-origin:0 0;line-height:16px">Write rating as TXXX (less compatible)</div><div style="position:absolute;left:307px;top:480px;width:8px;height:1px;background:repeating-linear-gradient(to right,#000 0 1px,transparent 1px 2px)"></div><div style="position:absolute;left:318px;top:474px;width:11px;height:11px;border:1px solid #333;background:#fff"></div><svg style="position:absolute;left:318px;top:474px" width="13" height="13"><path d="M2.5 6.5 L5 9.5 L10.5 3" fill="none" stroke="#222" stroke-width="1.3"/></svg><div style="position:absolute;left:334px;top:472px;white-space:pre;transform:scaleX(0.8774);transform-origin:0 0;line-height:16px">Retain Apple Gapless (iTunSMPB) when asked to remove all tags</div></div><div style="position:absolute;left:238px;top:513px;width:68px;height:22px;border:1px solid #adadad;background:#e1e1e1;"></div><div style="position:absolute;left:238px;top:513px;width:70px;height:24px;line-height:24px;text-align:center;color:#000;letter-spacing:-0.47px;">Reset all</div><div style="position:absolute;left:316px;top:513px;width:68px;height:22px;border:1px solid #adadad;background:#e1e1e1;"></div><div style="position:absolute;left:316px;top:513px;width:70px;height:24px;line-height:24px;text-align:center;color:#000;letter-spacing:-0.47px;">Reset page</div><div style="position:absolute;left:508px;top:513px;width:66px;height:20px;border:2px solid #0078d7;background:#e1e1e1"></div><div style="position:absolute;left:508px;top:513px;width:70px;height:24px;line-height:24px;text-align:center;letter-spacing:-0.47px;">OK</div><div style="position:absolute;left:585px;top:513px;width:68px;height:22px;border:1px solid #adadad;background:#e1e1e1;"></div><div style="position:absolute;left:585px;top:513px;width:70px;height:24px;line-height:24px;text-align:center;color:#000;letter-spacing:-0.47px;">Cancel</div><div style="position:absolute;left:663px;top:513px;width:68px;height:22px;border:1px solid #bfbfbf;background:#cccccc"></div><div style="position:absolute;left:663px;top:513px;width:70px;height:24px;line-height:24px;text-align:center;color:#838383;letter-spacing:-0.47px;">Apply</div><div style="position:absolute;left:747px;top:284px;width:1054px;height:754px;background:#fff"></div><svg style="position:absolute;left:756px;top:289px" width="15" height="17"><path d="M1.5 1 L4.5 4 Q7.5 2.8 10.5 4 L13.5 1 L13.8 7 Q14 12 7.5 16 Q1 12 1.2 7 Z" fill="#fff" stroke="#555" stroke-width="1"/><path d="M3 7.5 Q5 7 6.5 10 Q4 10.5 3 7.5Z M12 7.5 Q10 7 8.5 10 Q11 10.5 12 7.5Z" fill="#222"/></svg><div style="position:absolute;left:776px;top:290px;white-space:pre;transform:scaleX(0.9714);transform-origin:0 0;line-height:16px;color:#9a9a9a">foobar2000</div><div style="position:absolute;left:1681px;top:298px;width:11px;height:1px;background:#9a9a9a"></div><div style="position:absolute;left:1727px;top:292px;width:9px;height:9px;border:1px solid #9a9a9a"></div><svg style="position:absolute;left:1772px;top:292px" width="12" height="12"><path d="M0.5 0.5 L11.5 11.5 M11.5 0.5 L0.5 11.5" stroke="#9a9a9a" stroke-width="1"/></svg><div style="position:absolute;left:751px;top:315px;width:2px;height:23px;background:repeating-linear-gradient(to bottom,#b4b4b4 0 2px,transparent 2px 4px)"></div><div style="position:absolute;left:766px;top:319px;white-space:pre;transform:scaleX(0.8892);transform-origin:0 0;line-height:16px">File</div><div style="position:absolute;left:800px;top:319px;white-space:pre;transform:scaleX(0.9281);transform-origin:0 0;line-height:16px">Edit</div><div style="position:absolute;left:836px;top:319px;white-space:pre;transform:scaleX(0.9614);transform-origin:0 0;line-height:16px">View</div><div style="position:absolute;left:877px;top:319px;white-space:pre;transform:scaleX(0.9548);transform-origin:0 0;line-height:16px">Playback</div><div style="position:absolute;left:940px;top:319px;white-space:pre;transform:scaleX(0.9676);transform-origin:0 0;line-height:16px">Library</div><div style="position:absolute;left:992px;top:319px;white-space:pre;transform:scaleX(0.9803);transform-origin:0 0;line-height:16px">Help</div><div style="position:absolute;left:747px;top:339px;width:1054px;height:1px;background:#a0a0a0"></div><div style="position:absolute;left:751px;top:342px;width:2px;height:24px;background:repeating-linear-gradient(to bottom,#b4b4b4 0 2px,transparent 2px 4px)"></div><div style="position:absolute;left:762px;top:346px;width:14px;height:14px;border:1px solid #d0d0d0;border-radius:50%"></div><svg style="position:absolute;left:762px;top:346px" width="16" height="16"><rect x="5" y="5" width="6" height="6" fill="#111"/></svg><div style="position:absolute;left:786px;top:346px;width:14px;height:14px;border:1px solid #d0d0d0;border-radius:50%"></div><svg style="position:absolute;left:786px;top:346px" width="16" height="16"><rect x="5" y="4.5" width="2" height="7" fill="#111"/><rect x="9" y="4.5" width="2" height="7" fill="#111"/></svg><div style="position:absolute;left:810px;top:346px;width:14px;height:14px;border:1px solid #d0d0d0;border-radius:50%"></div><svg style="position:absolute;left:810px;top:346px" width="16" height="16"><path d="M6 4.5 L11.5 8 L6 11.5Z" fill="#111"/></svg><div style="position:absolute;left:834px;top:346px;width:14px;height:14px;border:1px solid #d0d0d0;border-radius:50%"></div><svg style="position:absolute;left:834px;top:346px" width="16" height="16"><rect x="4.5" y="4.5" width="1.6" height="7" fill="#111"/><path d="M11.5 4.5 L6.2 8 L11.5 11.5Z" fill="#111"/></svg><div style="position:absolute;left:858px;top:346px;width:14px;height:14px;border:1px solid #d0d0d0;border-radius:50%"></div><svg style="position:absolute;left:858px;top:346px" width="16" height="16"><rect x="10" y="4.5" width="1.6" height="7" fill="#111"/><path d="M4.5 4.5 L9.8 8 L4.5 11.5Z" fill="#111"/></svg><div style="position:absolute;left:882px;top:346px;width:14px;height:14px;border:1px solid #d0d0d0;border-radius:50%"></div><svg style="position:absolute;left:882px;top:346px" width="16" height="16"><path d="M4 5 L8 8 L4 11Z" fill="#111"/><text x="8" y="12" font-size="9" font-family="Liberation Sans" font-weight="bold" fill="#111">?</text></svg><div style="position:absolute;left:914px;top:346px;width:14px;height:14px;border:1px solid #d0d0d0;border-radius:50%"></div><svg style="position:absolute;left:914px;top:346px" width="16" height="16"><path d="M4.5 8.5 L8 4.5 L11.5 8.5Z" fill="#111"/><rect x="4.5" y="10" width="7" height="1.5" fill="#111"/></svg><div style="position:absolute;left:904px;top:345px;width:1px;height:18px;background:#7a7a7a"></div><div style="position:absolute;left:936px;top:345px;width:1px;height:18px;background:#7a7a7a"></div><div style="position:absolute;left:948px;top:346px;white-space:pre;transform:scaleX(1.0034);transform-origin:0 0;line-height:16px">Live layout editing</div><div style="position:absolute;left:1056px;top:341px;width:1px;height:26px;background:#d0d0d0"></div><div style="position:absolute;left:1060px;top:342px;width:2px;height:24px;background:repeating-linear-gradient(to bottom,#b4b4b4 0 2px,transparent 2px 4px)"></div><div style="position:absolute;left:1068px;top:352px;width:597px;height:4px;background:#e6e6e6;border:1px solid #d6d6d6;box-sizing:border-box"></div><div style="position:absolute;left:1067px;top:346px;width:8px;height:16px;background:#cdcdcd"></div><div style="position:absolute;left:1676px;top:341px;width:1px;height:26px;background:#d0d0d0"></div><div style="position:absolute;left:1680px;top:342px;width:2px;height:24px;background:repeating-linear-gradient(to bottom,#b4b4b4 0 2px,transparent 2px 4px)"></div><div style="position:absolute;left:1687px;top:343px;width:114px;height:23px;background:#e1e1e1;border:1px solid #adadad;box-sizing:border-box"></div><div style="position:absolute;left:1691px;top:346px;white-space:pre;transform:scaleX(0.9729);transform-origin:0 0;line-height:16px">Default</div><svg style="position:absolute;left:1785px;top:350px" width="11" height="7"><path d="M1 1 L5.5 5.5 L10 1" fill="none" stroke="#333" stroke-width="1.1"/></svg><div style="position:absolute;left:747px;top:368px;width:395px;height:19px;background:#cccccc"></div><div style="position:absolute;left:751px;top:369px;white-space:pre;transform:scaleX(0.9287);transform-origin:0 0;line-height:18px">New Playlist</div><div style="position:absolute;left:751px;top:388px;white-space:pre;transform:scaleX(0.9762);transform-origin:0 0;line-height:18px">Internet Radio</div><div style="position:absolute;left:1142px;top:368px;width:18px;height:37px;background:#f0f0f0"></div><svg style="position:absolute;left:1145px;top:373px" width="10" height="8"><path d="M1 6 L5 2 L9 6" fill="none" stroke="#505050" stroke-width="1.5"/></svg><svg style="position:absolute;left:1145px;top:392px" width="10" height="8"><path d="M1 2 L5 6 L9 2" fill="none" stroke="#505050" stroke-width="1.5"/></svg><div style="position:absolute;left:747px;top:405px;width:413px;height:1px;background:#ececec"></div><div style="position:absolute;left:747px;top:495px;width:412px;height:412px;background:#d6d6d6"></div><svg style="position:absolute;left:747px;top:495px" width="412" height="412" viewBox="0 0 412 412"><path d="M200.5 89.5 L240 89.5 C275 90 301.5 108 301.5 148 L301.5 171 L281.5 171 L281.5 154 C281.5 138 266 128 232 127.5 L221 127.5 L221 272 C221 300 192 320.7 158 320.7 C130 320.7 110 306 110 284 C110 262 132 243.8 162 243.8 C176 243.8 188 246 200.5 251.5 Z" fill="#404040"/></svg><div style="position:absolute;left:1159px;top:405px;width:1px;height:591px;background:#e8e8e8"></div><div style="position:absolute;left:1167px;top:371px;white-space:pre;transform:scaleX(0.9874);transform-origin:0 0;line-height:16px">Artist</div><div style="position:absolute;left:1326px;top:371px;white-space:pre;transform:scaleX(1.0467);transform-origin:0 0;line-height:16px">#</div><div style="position:absolute;left:1346px;top:371px;white-space:pre;transform:scaleX(0.9355);transform-origin:0 0;line-height:16px">Title</div><div style="position:absolute;left:1534px;top:371px;white-space:pre;transform:scaleX(1.0289);transform-origin:0 0;line-height:16px">Album</div><div style="position:absolute;left:1710px;top:371px;white-space:pre;transform:scaleX(0.9661);transform-origin:0 0;line-height:16px">Date</div><div style="position:absolute;left:1758px;top:371px;white-space:pre;transform:scaleX(0.9945);transform-origin:0 0;line-height:16px">Length</div><div style="position:absolute;left:1320px;top:368px;width:1px;height:21px;background:#e5e5e5"></div><div style="position:absolute;left:1339px;top:368px;width:1px;height:21px;background:#e5e5e5"></div><div style="position:absolute;left:1527px;top:368px;width:1px;height:21px;background:#e5e5e5"></div><div style="position:absolute;left:1703px;top:368px;width:1px;height:21px;background:#e5e5e5"></div><div style="position:absolute;left:1749px;top:368px;width:1px;height:21px;background:#e5e5e5"></div><div style="position:absolute;left:1161px;top:389px;width:640px;height:361px;background:#cccccc"></div><div style="position:absolute;left:1166px;top:391px;white-space:pre;transform:scaleX(0.8489);transform-origin:0 0;line-height:16px">VARIOUS ARTISTS</div><div style="position:absolute;left:1324px;top:391px;white-space:pre;transform:scaleX(0.8533);transform-origin:0 0;line-height:16px">01</div><div style="position:absolute;left:1344px;top:391px;white-space:pre;transform:scaleX(0.9196);transform-origin:0 0;line-height:16px">PAUL KUHN, JOHNNY TEUPEN, ...</div><div style="position:absolute;left:1533px;top:391px;white-space:pre;transform:scaleX(0.9015);transform-origin:0 0;line-height:16px">THE SOUND REVOLUTION - D...</div><div style="position:absolute;left:1708px;top:391px;white-space:pre;transform:scaleX(0.8763);transform-origin:0 0;line-height:16px">2003</div><div style="position:absolute;left:1750px;top:391px;width:47px;text-align:right;line-height:16px">4:46</div><div style="position:absolute;left:1166px;top:410px;white-space:pre;transform:scaleX(0.8489);transform-origin:0 0;line-height:16px">VARIOUS ARTISTS</div><div style="position:absolute;left:1324px;top:410px;white-space:pre;transform:scaleX(0.8533);transform-origin:0 0;line-height:16px">02</div><div style="position:absolute;left:1344px;top:410px;white-space:pre;transform:scaleX(0.9401);transform-origin:0 0;line-height:16px">HORIZONT &amp; FRIENDS - You're ...</div><div style="position:absolute;left:1533px;top:410px;white-space:pre;transform:scaleX(0.9015);transform-origin:0 0;line-height:16px">THE SOUND REVOLUTION - D...</div><div style="position:absolute;left:1708px;top:410px;white-space:pre;transform:scaleX(0.8763);transform-origin:0 0;line-height:16px">2003</div><div style="position:absolute;left:1750px;top:410px;width:47px;text-align:right;line-height:16px">4:17</div><div style="position:absolute;left:1166px;top:429px;white-space:pre;transform:scaleX(0.8489);transform-origin:0 0;line-height:16px">VARIOUS ARTISTS</div><div style="position:absolute;left:1324px;top:429px;white-space:pre;transform:scaleX(0.8533);transform-origin:0 0;line-height:16px">03</div><div style="position:absolute;left:1344px;top:429px;white-space:pre;transform:scaleX(0.9132);transform-origin:0 0;line-height:16px">BRUNO BERTONE SOUND - Ano...</div><div style="position:absolute;left:1533px;top:429px;white-space:pre;transform:scaleX(0.9015);transform-origin:0 0;line-height:16px">THE SOUND REVOLUTION - D...</div><div style="position:absolute;left:1708px;top:429px;white-space:pre;transform:scaleX(0.8763);transform-origin:0 0;line-height:16px">2003</div><div style="position:absolute;left:1750px;top:429px;width:47px;text-align:right;line-height:16px">3:50</div><div style="position:absolute;left:1166px;top:448px;white-space:pre;transform:scaleX(0.8489);transform-origin:0 0;line-height:16px">VARIOUS ARTISTS</div><div style="position:absolute;left:1324px;top:448px;white-space:pre;transform:scaleX(0.8533);transform-origin:0 0;line-height:16px">04</div><div style="position:absolute;left:1344px;top:448px;white-space:pre;transform:scaleX(0.9516);transform-origin:0 0;line-height:16px">DIAMOND FINGER - Lounge Suite</div><div style="position:absolute;left:1533px;top:448px;white-space:pre;transform:scaleX(0.9015);transform-origin:0 0;line-height:16px">THE SOUND REVOLUTION - D...</div><div style="position:absolute;left:1708px;top:448px;white-space:pre;transform:scaleX(0.8763);transform-origin:0 0;line-height:16px">2003</div><div style="position:absolute;left:1750px;top:448px;width:47px;text-align:right;line-height:16px">4:00</div><div style="position:absolute;left:1166px;top:467px;white-space:pre;transform:scaleX(0.8489);transform-origin:0 0;line-height:16px">VARIOUS ARTISTS</div><div style="position:absolute;left:1324px;top:467px;white-space:pre;transform:scaleX(0.8533);transform-origin:0 0;line-height:16px">05</div><div style="position:absolute;left:1344px;top:467px;white-space:pre;transform:scaleX(0.8923);transform-origin:0 0;line-height:16px">OSCAR PETERSON TRIO - Where...</div><div style="position:absolute;left:1533px;top:467px;white-space:pre;transform:scaleX(0.9015);transform-origin:0 0;line-height:16px">THE SOUND REVOLUTION - D...</div><div style="position:absolute;left:1708px;top:467px;white-space:pre;transform:scaleX(0.8763);transform-origin:0 0;line-height:16px">2003</div><div style="position:absolute;left:1750px;top:467px;width:47px;text-align:right;line-height:16px">3:52</div><div style="position:absolute;left:1166px;top:486px;white-space:pre;transform:scaleX(0.8489);transform-origin:0 0;line-height:16px">VARIOUS ARTISTS</div><div style="position:absolute;left:1324px;top:486px;white-space:pre;transform:scaleX(0.8533);transform-origin:0 0;line-height:16px">06</div><div style="position:absolute;left:1344px;top:486px;white-space:pre;transform:scaleX(0.9194);transform-origin:0 0;line-height:16px">DUKE ELLINGTON - Take The "A"...</div><div style="position:absolute;left:1533px;top:486px;white-space:pre;transform:scaleX(0.9015);transform-origin:0 0;line-height:16px">THE SOUND REVOLUTION - D...</div><div style="position:absolute;left:1708px;top:486px;white-space:pre;transform:scaleX(0.8763);transform-origin:0 0;line-height:16px">2003</div><div style="position:absolute;left:1750px;top:486px;width:47px;text-align:right;line-height:16px">2:52</div><div style="position:absolute;left:1166px;top:505px;white-space:pre;transform:scaleX(0.8489);transform-origin:0 0;line-height:16px">VARIOUS ARTISTS</div><div style="position:absolute;left:1324px;top:505px;white-space:pre;transform:scaleX(0.8533);transform-origin:0 0;line-height:16px">07</div><div style="position:absolute;left:1344px;top:505px;white-space:pre;transform:scaleX(0.9282);transform-origin:0 0;line-height:16px">LOUIS ARMSTRONG - Mack The...</div><div style="position:absolute;left:1533px;top:505px;white-space:pre;transform:scaleX(0.9015);transform-origin:0 0;line-height:16px">THE SOUND REVOLUTION - D...</div><div style="position:absolute;left:1708px;top:505px;white-space:pre;transform:scaleX(0.8763);transform-origin:0 0;line-height:16px">2003</div><div style="position:absolute;left:1750px;top:505px;width:47px;text-align:right;line-height:16px">3:44</div><div style="position:absolute;left:1166px;top:524px;white-space:pre;transform:scaleX(0.8489);transform-origin:0 0;line-height:16px">VARIOUS ARTISTS</div><div style="position:absolute;left:1324px;top:524px;white-space:pre;transform:scaleX(0.8533);transform-origin:0 0;line-height:16px">08</div><div style="position:absolute;left:1344px;top:524px;white-space:pre;transform:scaleX(0.9291);transform-origin:0 0;line-height:16px">CANNONBALL ADDERLEY - Ser...</div><div style="position:absolute;left:1533px;top:524px;white-space:pre;transform:scaleX(0.9015);transform-origin:0 0;line-height:16px">THE SOUND REVOLUTION - D...</div><div style="position:absolute;left:1708px;top:524px;white-space:pre;transform:scaleX(0.8763);transform-origin:0 0;line-height:16px">2003</div><div style="position:absolute;left:1750px;top:524px;width:47px;text-align:right;line-height:16px">5:22</div><div style="position:absolute;left:1166px;top:543px;white-space:pre;transform:scaleX(0.8489);transform-origin:0 0;line-height:16px">VARIOUS ARTISTS</div><div style="position:absolute;left:1324px;top:543px;white-space:pre;transform:scaleX(0.8533);transform-origin:0 0;line-height:16px">09</div><div style="position:absolute;left:1344px;top:543px;white-space:pre;transform:scaleX(0.9048);transform-origin:0 0;line-height:16px">THE IRISH PRAYERS - The Hail M...</div><div style="position:absolute;left:1533px;top:543px;white-space:pre;transform:scaleX(0.9015);transform-origin:0 0;line-height:16px">THE SOUND REVOLUTION - D...</div><div style="position:absolute;left:1708px;top:543px;white-space:pre;transform:scaleX(0.8763);transform-origin:0 0;line-height:16px">2003</div><div style="position:absolute;left:1750px;top:543px;width:47px;text-align:right;line-height:16px">5:39</div><div style="position:absolute;left:1166px;top:562px;white-space:pre;transform:scaleX(0.8489);transform-origin:0 0;line-height:16px">VARIOUS ARTISTS</div><div style="position:absolute;left:1324px;top:562px;white-space:pre;transform:scaleX(0.8533);transform-origin:0 0;line-height:16px">10</div><div style="position:absolute;left:1344px;top:562px;white-space:pre;transform:scaleX(0.9598);transform-origin:0 0;line-height:16px">W.A. MOZART - Betulia Liberata ...</div><div style="position:absolute;left:1533px;top:562px;white-space:pre;transform:scaleX(0.9015);transform-origin:0 0;line-height:16px">THE SOUND REVOLUTION - D...</div><div style="position:absolute;left:1708px;top:562px;white-space:pre;transform:scaleX(0.8763);transform-origin:0 0;line-height:16px">2003</div><div style="position:absolute;left:1750px;top:562px;width:47px;text-align:right;line-height:16px">3:40</div><div style="position:absolute;left:1166px;top:581px;white-space:pre;transform:scaleX(0.8489);transform-origin:0 0;line-height:16px">VARIOUS ARTISTS</div><div style="position:absolute;left:1324px;top:581px;white-space:pre;transform:scaleX(0.9143);transform-origin:0 0;line-height:16px">11</div><div style="position:absolute;left:1344px;top:581px;white-space:pre;transform:scaleX(0.9628);transform-origin:0 0;line-height:16px">ANTONIO VIVALDI - Allegro No...</div><div style="position:absolute;left:1533px;top:581px;white-space:pre;transform:scaleX(0.9015);transform-origin:0 0;line-height:16px">THE SOUND REVOLUTION - D...</div><div style="position:absolute;left:1708px;top:581px;white-space:pre;transform:scaleX(0.8763);transform-origin:0 0;line-height:16px">2003</div><div style="position:absolute;left:1750px;top:581px;width:47px;text-align:right;line-height:16px">3:31</div><div style="position:absolute;left:1166px;top:600px;white-space:pre;transform:scaleX(0.8489);transform-origin:0 0;line-height:16px">VARIOUS ARTISTS</div><div style="position:absolute;left:1324px;top:600px;white-space:pre;transform:scaleX(0.8533);transform-origin:0 0;line-height:16px">12</div><div style="position:absolute;left:1344px;top:600px;white-space:pre;transform:scaleX(0.9575);transform-origin:0 0;line-height:16px">LEON MINKUS - Paquita - Coda....</div><div style="position:absolute;left:1533px;top:600px;white-space:pre;transform:scaleX(0.9015);transform-origin:0 0;line-height:16px">THE SOUND REVOLUTION - D...</div><div style="position:absolute;left:1708px;top:600px;white-space:pre;transform:scaleX(0.8763);transform-origin:0 0;line-height:16px">2003</div><div style="position:absolute;left:1750px;top:600px;width:47px;text-align:right;line-height:16px">1:51</div><div style="position:absolute;left:1166px;top:619px;white-space:pre;transform:scaleX(0.8489);transform-origin:0 0;line-height:16px">VARIOUS ARTISTS</div><div style="position:absolute;left:1324px;top:619px;white-space:pre;transform:scaleX(0.8533);transform-origin:0 0;line-height:16px">13</div><div style="position:absolute;left:1344px;top:619px;white-space:pre;transform:scaleX(0.9315);transform-origin:0 0;line-height:16px">MAURICE RAVEL - String Quarte...</div><div style="position:absolute;left:1533px;top:619px;white-space:pre;transform:scaleX(0.9015);transform-origin:0 0;line-height:16px">THE SOUND REVOLUTION - D...</div><div style="position:absolute;left:1708px;top:619px;white-space:pre;transform:scaleX(0.8763);transform-origin:0 0;line-height:16px">2003</div><div style="position:absolute;left:1750px;top:619px;width:47px;text-align:right;line-height:16px">4:31</div><div style="position:absolute;left:1166px;top:638px;white-space:pre;transform:scaleX(0.8489);transform-origin:0 0;line-height:16px">VARIOUS ARTISTS</div><div style="position:absolute;left:1324px;top:638px;white-space:pre;transform:scaleX(0.8533);transform-origin:0 0;line-height:16px">14</div><div style="position:absolute;left:1344px;top:638px;white-space:pre;transform:scaleX(0.9133);transform-origin:0 0;line-height:16px">DIMITRJI SHOSTAKOVICH - Lady...</div><div style="position:absolute;left:1533px;top:638px;white-space:pre;transform:scaleX(0.9015);transform-origin:0 0;line-height:16px">THE SOUND REVOLUTION - D...</div><div style="position:absolute;left:1708px;top:638px;white-space:pre;transform:scaleX(0.8763);transform-origin:0 0;line-height:16px">2003</div><div style="position:absolute;left:1750px;top:638px;width:47px;text-align:right;line-height:16px">4:56</div><div style="position:absolute;left:1166px;top:657px;white-space:pre;transform:scaleX(0.8489);transform-origin:0 0;line-height:16px">VARIOUS ARTISTS</div><div style="position:absolute;left:1324px;top:657px;white-space:pre;transform:scaleX(0.8533);transform-origin:0 0;line-height:16px">15</div><div style="position:absolute;left:1344px;top:657px;white-space:pre;transform:scaleX(0.9240);transform-origin:0 0;line-height:16px">REINHOLD FRIEDRICH - M. HAY...</div><div style="position:absolute;left:1533px;top:657px;white-space:pre;transform:scaleX(0.9015);transform-origin:0 0;line-height:16px">THE SOUND REVOLUTION - D...</div><div style="position:absolute;left:1708px;top:657px;white-space:pre;transform:scaleX(0.8763);transform-origin:0 0;line-height:16px">2003</div><div style="position:absolute;left:1750px;top:657px;width:47px;text-align:right;line-height:16px">2:59</div><div style="position:absolute;left:1166px;top:676px;white-space:pre;transform:scaleX(0.8489);transform-origin:0 0;line-height:16px">VARIOUS ARTISTS</div><div style="position:absolute;left:1324px;top:676px;white-space:pre;transform:scaleX(0.8533);transform-origin:0 0;line-height:16px">16</div><div style="position:absolute;left:1344px;top:676px;white-space:pre;transform:scaleX(0.9200);transform-origin:0 0;line-height:16px">JOHANN STRAUSS - Radetzky-...</div><div style="position:absolute;left:1533px;top:676px;white-space:pre;transform:scaleX(0.9015);transform-origin:0 0;line-height:16px">THE SOUND REVOLUTION - D...</div><div style="position:absolute;left:1708px;top:676px;white-space:pre;transform:scaleX(0.8763);transform-origin:0 0;line-height:16px">2003</div><div style="position:absolute;left:1750px;top:676px;width:47px;text-align:right;line-height:16px">2:57</div><div style="position:absolute;left:1166px;top:695px;white-space:pre;transform:scaleX(0.8489);transform-origin:0 0;line-height:16px">VARIOUS ARTISTS</div><div style="position:absolute;left:1324px;top:695px;white-space:pre;transform:scaleX(0.8533);transform-origin:0 0;line-height:16px">17</div><div style="position:absolute;left:1344px;top:695px;white-space:pre;transform:scaleX(0.8957);transform-origin:0 0;line-height:16px">GIUSEPPE VERDI - Il Trovatore (D...</div><div style="position:absolute;left:1533px;top:695px;white-space:pre;transform:scaleX(0.9015);transform-origin:0 0;line-height:16px">THE SOUND REVOLUTION - D...</div><div style="position:absolute;left:1708px;top:695px;white-space:pre;transform:scaleX(0.8763);transform-origin:0 0;line-height:16px">2003</div><div style="position:absolute;left:1750px;top:695px;width:47px;text-align:right;line-height:16px">3:12</div><div style="position:absolute;left:1166px;top:714px;white-space:pre;transform:scaleX(0.8489);transform-origin:0 0;line-height:16px">VARIOUS ARTISTS</div><div style="position:absolute;left:1324px;top:714px;white-space:pre;transform:scaleX(0.8533);transform-origin:0 0;line-height:16px">18</div><div style="position:absolute;left:1344px;top:714px;white-space:pre;transform:scaleX(0.9255);transform-origin:0 0;line-height:16px">JOHANN SEBASTIAN BACH - O...</div><div style="position:absolute;left:1533px;top:714px;white-space:pre;transform:scaleX(0.9015);transform-origin:0 0;line-height:16px">THE SOUND REVOLUTION - D...</div><div style="position:absolute;left:1708px;top:714px;white-space:pre;transform:scaleX(0.8763);transform-origin:0 0;line-height:16px">2003</div><div style="position:absolute;left:1750px;top:714px;width:47px;text-align:right;line-height:16px">1:56</div><div style="position:absolute;left:1166px;top:733px;white-space:pre;transform:scaleX(0.8489);transform-origin:0 0;line-height:16px">VARIOUS ARTISTS</div><div style="position:absolute;left:1324px;top:733px;white-space:pre;transform:scaleX(0.8533);transform-origin:0 0;line-height:16px">19</div><div style="position:absolute;left:1344px;top:733px;white-space:pre;transform:scaleX(0.9188);transform-origin:0 0;line-height:16px">LUDWIG VAN BEETHOVEN - Me...</div><div style="position:absolute;left:1533px;top:733px;white-space:pre;transform:scaleX(0.9015);transform-origin:0 0;line-height:16px">THE SOUND REVOLUTION - D...</div><div style="position:absolute;left:1708px;top:733px;white-space:pre;transform:scaleX(0.8763);transform-origin:0 0;line-height:16px">2003</div><div style="position:absolute;left:1750px;top:733px;width:47px;text-align:right;line-height:16px">4:04</div><div style="position:absolute;left:747px;top:996px;width:1054px;height:42px;background:#f0f0f0;border-top:1px solid #dadada;box-sizing:border-box"></div><div style="position:absolute;left:751.7px;top:1001px;white-space:pre;transform:scaleX(0.9530);transform-origin:0 0;line-height:16px">19 items selected</div><div style="position:absolute;left:751.7px;top:1019px;white-space:pre;transform:scaleX(0.9451);transform-origin:0 0;line-height:16px">Length: 1:11:57</div><svg style="position:absolute;left:1700px;top:1005px" width="100" height="30"><path d="M5.5 20.5 L86 8" stroke="#a0a0a0" stroke-width="1"/><path d="M6 22 L86 22" stroke="#fff" stroke-width="1"/><rect x="86" y="4" width="10" height="19" fill="#0078d7"/></svg><div style="position:absolute;left:0px;top:1050px;width:1920px;height:30px;background:#753f00"></div><svg style="position:absolute;left:10px;top:1058px" width="17" height="16"><path d="M0 2.2 L6.6 1.3 L6.6 7.4 L0 7.4Z M7.6 1.1 L16 0 L16 7.4 L7.6 7.4Z M0 8.4 L6.6 8.4 L6.6 14.6 L0 13.8Z M7.6 8.4 L16 8.4 L16 16 L7.6 14.8Z" fill="#fff"/></svg><div style="position:absolute;left:48px;top:1057px;width:16px;height:16px;border-radius:50%;background:conic-gradient(from 200deg,#1d6fd1,#2aa0e8,#4ed37a,#2aa0e8,#1d6fd1)"></div><div style="position:absolute;left:54px;top:1064px;width:6px;height:5px;border-radius:50%;background:#753f00"></div><div style="position:absolute;left:88px;top:1057px;width:11px;height:16px;background:linear-gradient(#dfe9f5,#a9c9ea);border:1px solid #9db3cc;box-sizing:border-box"></div><div style="position:absolute;left:122px;top:1058px;width:16px;height:13px;background:#cfe3f7;border:1px solid #5d8fc7;box-sizing:border-box"></div><div style="position:absolute;left:125px;top:1061px;width:5px;height:5px;background:#e8b23a"></div><div style="position:absolute;left:160px;top:1058px;width:16px;height:14px;background:#f5c94a"></div><div style="position:absolute;left:163px;top:1065px;width:10px;height:6px;background:#3b8fd9"></div><div style="position:absolute;left:197px;top:1057px;width:16px;height:16px;background:#8a8a8a"></div><div style="position:absolute;left:199px;top:1060px;width:12px;height:10px;background:#e23a2e;border-radius:3px"></div><svg style="position:absolute;left:199px;top:1060px" width="12" height="10"><path d="M4.5 2.5 L8.5 5 L4.5 7.5Z" fill="#fff"/></svg><div style="position:absolute;left:228px;top:1078px;width:152px;height:2px;background:#f2c48c"></div><div style="position:absolute;left:232px;top:1057px;width:16px;height:16px;border-radius:50%;background:radial-gradient(circle at 35% 35%,#e8f4ff,#2a7fd4 55%,#0d4fa0)"></div><div style="position:absolute;left:252px;top:1057px;white-space:pre;transform:scaleX(1.0099);transform-origin:0 0;line-height:16px;color:#fff">Программный ауди...</div><div style="position:absolute;left:385px;top:1050px;width:160px;height:30px;background:#a8620c"></div><div style="position:absolute;left:385px;top:1078px;width:160px;height:2px;background:#f2c48c"></div><svg style="position:absolute;left:393px;top:1057px" width="15" height="17"><path d="M1.5 1 L4.5 4 Q7.5 2.8 10.5 4 L13.5 1 L13.8 7 Q14 12 7.5 16 Q1 12 1.2 7 Z" fill="#fff"/><path d="M3 7.5 Q5 7 6.5 10 Q4 10.5 3 7.5Z M12 7.5 Q10 7 8.5 10 Q11 10.5 12 7.5Z" fill="#222"/></svg><div style="position:absolute;left:413px;top:1057px;white-space:pre;transform:scaleX(0.9714);transform-origin:0 0;line-height:16px;color:#fff">foobar2000</div><div style="position:absolute;left:550px;top:1078px;width:152px;height:2px;background:#f2c48c"></div><div style="position:absolute;left:554px;top:1058px;width:15px;height:12px;background:#dfe8f2;border:1px solid #8ea6bf;box-sizing:border-box"></div><svg style="position:absolute;left:555px;top:1059px" width="13" height="10"><path d="M1 8 L4 4 L7 6 L12 1" fill="none" stroke="#3a7bc8" stroke-width="1.3"/></svg><div style="position:absolute;left:573px;top:1057px;white-space:pre;transform:scaleX(0.9907);transform-origin:0 0;line-height:16px;color:#fff">Диспетчер задач</div><svg style="position:absolute;left:1654px;top:1060px" width="12" height="8"><path d="M1 7 L6 2 L11 7" fill="none" stroke="#fff" stroke-width="1.2"/></svg><svg style="position:absolute;left:1675px;top:1058px" width="16" height="14"><path d="M1 13 L3 1 L8 7 L13 1 L15 13 L11 13 L10 8 L8 11 L6 8 L5 13Z" fill="#2a5ee8"/></svg><div style="position:absolute;left:1700px;top:1057px;width:16px;height:16px;background:#000"></div><div style="position:absolute;left:1700px;top:1055px;white-space:pre;font-size:10px;line-height:14px;color:#3cd23c;letter-spacing:-0.5px">391</div><div style="position:absolute;left:1702px;top:1070px;width:12px;height:2px;background:linear-gradient(90deg,#e23,#fd0,#3c3)"></div><div style="position:absolute;left:1724px;top:1060px;width:16px;height:9px;border-radius:50%;background:radial-gradient(circle,#123 0 2px,#3fb6e8 3px,#bfe8f8 6px)"></div><svg style="position:absolute;left:1748px;top:1057px" width="17" height="16"><rect x="4.5" y="2.5" width="12" height="9" fill="none" stroke="#fff"/><rect x="0.5" y="0.5" width="4" height="4" fill="#753f00" stroke="#fff"/><path d="M10 12 V15 M6 15.5 H14 M2.5 5 V15" stroke="#fff"/></svg><svg style="position:absolute;left:1771px;top:1057px" width="17" height="16"><path d="M1.5 5.5 H4.5 L8.5 2 V14 L4.5 10.5 H1.5Z" fill="none" stroke="#fff"/><path d="M10.5 5.5 Q12 8 10.5 10.5 M12.5 3.5 Q15 8 12.5 12.5" fill="none" stroke="#fff"/></svg><div style="position:absolute;left:1799px;top:1057px;white-space:pre;transform:scaleX(0.8988);transform-origin:0 0;line-height:16px;color:#fff">РУС</div><div style="position:absolute;left:1835px;top:1057px;white-space:pre;transform:scaleX(0.8758);transform-origin:0 0;line-height:16px;color:#fff">19:28</div><svg style="position:absolute;left:1878px;top:1057px" width="18" height="17"><path d="M0.5 0.5 H16.5 V12.5 H11 L8.5 15.5 L6 12.5 H0.5Z" fill="none" stroke="#fff"/></svg><div style="position:absolute;left:1915px;top:1050px;width:1px;height:30px;background:#9a6a3a"></div></body></html>
